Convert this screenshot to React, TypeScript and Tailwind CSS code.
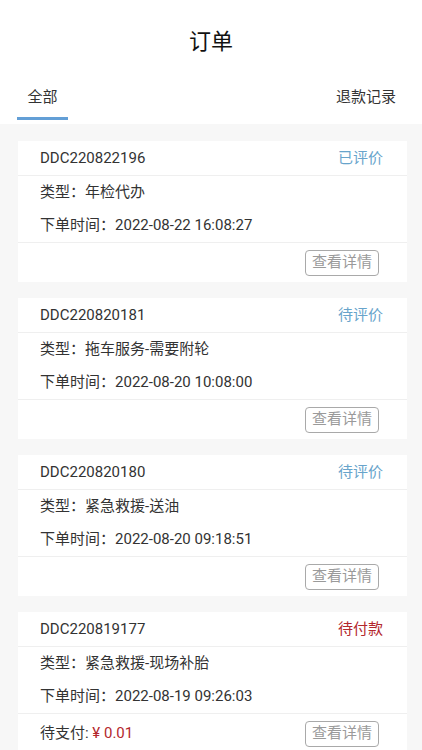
import React from 'react';

type Order = {
  no: string;
  status: string;
  statusColor: string;
  type: string;
  time: string;
  pay?: string;
};

const orders: Order[] = [
  { no: 'DDC220822196', status: '已评价', statusColor: 'text-[#68a4cb]', type: '年检代办', time: '2022-08-22 16:08:27' },
  { no: 'DDC220820181', status: '待评价', statusColor: 'text-[#68a4cb]', type: '拖车服务-需要附轮', time: '2022-08-20 10:08:00' },
  { no: 'DDC220820180', status: '待评价', statusColor: 'text-[#68a4cb]', type: '紧急救援-送油', time: '2022-08-20 09:18:51' },
  { no: 'DDC220819177', status: '待付款', statusColor: 'text-[#b3272d]', type: '紧急救援-现场补胎', time: '2022-08-19 09:26:03', pay: '0.01' },
];

function OrderCard({ order }: { order: Order }) {
  return (
    <div className="ml-[18px] mr-[15px] bg-white">
      {/* header */}
      <div className="h-[35px] flex items-center justify-between pl-[22px] pr-[24px] border-b border-[#efefef]">
        <span className="text-[15px] text-[#333]">{order.no}</span>
        <span className={`text-[15px] ${order.statusColor}`}>{order.status}</span>
      </div>
      {/* body */}
      <div className="pl-[22px] border-b border-[#efefef]">
        <div className="h-[33px] flex items-center text-[15px] text-[#333]">类型：{order.type}</div>
        <div className="h-[33px] flex items-center text-[15px] text-[#333]">下单时间：{order.time}</div>
      </div>
      {/* footer */}
      <div className="h-[39px] flex items-center justify-between pl-[22px] pr-[28px]">
        {order.pay ? (
          <span className="text-[15px] text-[#333]">
            待支付: <span className="text-[#b3272d]">¥ {order.pay}</span>
          </span>
        ) : (
          <span />
        )}
        <button className="h-[26px] px-[6px] rounded-[4px] border border-[#a9a9a9] text-[15px] text-[#9a9a9a] leading-none">
          查看详情
        </button>
      </div>
    </div>
  );
}

export default function App() {
  return (
    <div
      className="w-[422px] h-[750px] overflow-hidden bg-[#f7f7f7]"
      style={{ fontFamily: 'Roboto, "Noto Sans CJK SC", sans-serif' }}
    >
      <div className="bg-white">
        <div className="pt-[29px] text-center text-[22px] leading-[26px] text-[#111]">订单</div>
        <div className="pt-[32px] flex justify-between">
          <div className="ml-[17px] w-[51px] flex flex-col items-center">
            <span className="text-[15px] leading-[20px] text-[#333]">全部</span>
            <div className="mt-[10px] h-[3px] w-full bg-[#639fd6]" />
          </div>
          <span className="mr-[26px] text-[15px] leading-[20px] text-[#333]">退款记录</span>
        </div>
        <div className="h-[4px]" />
      </div>

      <div className="pt-[17px] flex flex-col gap-[16px]">
        {orders.map((o) => (
          <OrderCard key={o.no} order={o} />
        ))}
      </div>
    </div>
  );
}
